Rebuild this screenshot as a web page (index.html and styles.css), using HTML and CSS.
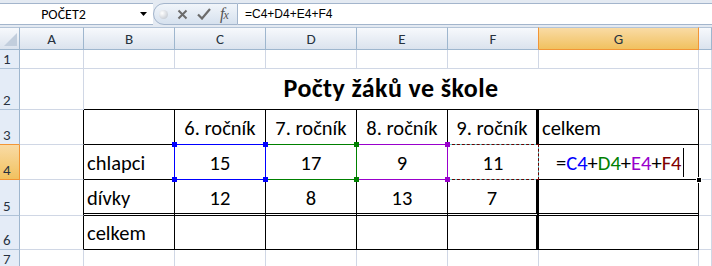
FILE: index.html
```html
<!DOCTYPE html>
<html lang="cs">
<head>
    <meta charset="UTF-8">
    <title>Počty žáků ve škole</title>
    <link rel="stylesheet" href="styles.css">
</head>
<body>

    <div class="formula-bar">
        <div class="name-box">
            <span class="name">POČET2</span>
            <svg class="drop" width="7" height="4" viewBox="0 0 7 4"><path d="M0 0h7L3.5 4z" fill="#000"/></svg>
        </div>
        <div class="fx-buttons">
            <span class="dot"></span>
            <svg class="btn" width="11" height="11" viewBox="0 0 11 11"><path d="M1.5 1.5l8 8M9.5 1.5l-8 8" stroke="#6b6b6b" stroke-width="2"/></svg>
            <svg class="btn" width="14" height="12" viewBox="0 0 14 12"><path d="M1 6.5l4 4L13 1" stroke="#6b6b6b" stroke-width="2.2" fill="none"/></svg>
            <span class="fx">f<small>x</small></span>
        </div>
        <div class="formula">=C4+D4+E4+F4</div>
    </div>

    <div class="sheet">
        <!-- column headers -->
        <div class="corner"><svg width="15" height="15" viewBox="0 0 15 15"><path d="M14 1v13H1z" fill="#c2cedd"/></svg></div>
        <div class="col">A</div>
        <div class="col">B</div>
        <div class="col">C</div>
        <div class="col">D</div>
        <div class="col">E</div>
        <div class="col pre-sel">F</div>
        <div class="col sel">G</div>
        <div class="col"></div>

        <!-- row 1 -->
        <div class="rh">1</div>
        <div class="cell"></div><div class="cell"></div><div class="cell"></div><div class="cell"></div>
        <div class="cell"></div><div class="cell"></div><div class="cell"></div><div class="cell"></div>

        <!-- row 2 -->
        <div class="rh">2</div>
        <div class="cell"></div>
        <div class="cell title">Počty žáků ve škole</div>
        <div class="cell"></div>

        <!-- row 3 -->
        <div class="rh pre-sel">3</div>
        <div class="cell edge"></div>
        <div class="cell tb"></div>
        <div class="cell tb mid">6. ročník</div>
        <div class="cell tb mid">7. ročník</div>
        <div class="cell tb mid">8. ročník</div>
        <div class="cell tb mid thick">9. ročník</div>
        <div class="cell tb">celkem</div>
        <div class="cell"></div>

        <!-- row 4 -->
        <div class="rh sel">4</div>
        <div class="cell edge"></div>
        <div class="cell tb">chlapci</div>
        <div class="cell tb mid">15<span class="ref blue"><i class="tl"></i><i class="tr"></i><i class="bl"></i><i class="br"></i></span></div>
        <div class="cell tb mid">17<span class="ref green"><i class="tl"></i><i class="tr"></i><i class="bl"></i><i class="br"></i></span></div>
        <div class="cell tb mid">9<span class="ref purple"><i class="tl"></i><i class="tr"></i><i class="bl"></i><i class="br"></i></span></div>
        <div class="cell tb mid">11<span class="ants"></span></div>
        <div class="cell tb edit">
            <span>=<span class="c-blue">C4</span>+<span class="c-green">D4</span>+<span class="c-purple">E4</span>+<span class="c-red">F4</span><span class="caret"></span></span>
            <span class="handle"></span>
        </div>
        <div class="cell"></div>

        <!-- row 5 -->
        <div class="rh">5</div>
        <div class="cell edge"></div>
        <div class="cell tb dbl">dívky</div>
        <div class="cell tb dbl mid">12</div>
        <div class="cell tb dbl mid">8</div>
        <div class="cell tb dbl mid">13</div>
        <div class="cell tb dbl mid thick">7</div>
        <div class="cell tb dbl"></div>
        <div class="cell"></div>

        <!-- row 6 -->
        <div class="rh">6</div>
        <div class="cell edge"></div>
        <div class="cell tb">celkem</div>
        <div class="cell tb"></div>
        <div class="cell tb"></div>
        <div class="cell tb"></div>
        <div class="cell tb thick"></div>
        <div class="cell tb"></div>
        <div class="cell"></div>

        <!-- row 7 -->
        <div class="rh">7</div>
        <div class="cell"></div><div class="cell"></div><div class="cell"></div><div class="cell"></div>
        <div class="cell"></div><div class="cell"></div><div class="cell"></div><div class="cell"></div>
    </div>

</body>
</html>
```

FILE: styles.css
```css
* {
    box-sizing: border-box;
}
body {
    margin: 0;
    width: 712px;
    height: 266px;
    overflow: hidden;
    background-color: #fff;
    font-family: 'Carlito', 'Lato', 'Liberation Sans', sans-serif;
    color: #000;
}

/* formula bar */
.formula-bar {
    display: flex;
    height: 27px;
    padding: 3px 0 2px;
    background-color: #e4eaf2;
}
.name-box {
    width: 153px;
    display: flex;
    align-items: center;
    background-color: #fff;
    border-top: 1px solid #a3b5cc;
    border-bottom: 1px solid #a3b5cc;
}
.name {
    width: 127px;
    text-align: center;
    font-size: 14px;
}
.drop {
    margin-left: 13px;
}
.fx-buttons {
    width: 85px;
    display: flex;
    align-items: center;
    padding-left: 5px;
    gap: 9px;
    background: linear-gradient(#f1f5fa, #d6e1ee);
    border: 1px solid #a3b5cc;
    border-radius: 11px 0 0 11px;
}
.dot {
    width: 9px;
    height: 9px;
    border-radius: 50%;
    background: radial-gradient(circle at 35% 35%, #fff 0, #d4d8de 60%, #b9bfc8 100%);
}
.fx {
    font-family: 'Liberation Serif', serif;
    font-style: italic;
    font-size: 16px;
    color: #555;
    letter-spacing: -1px;
}
.fx small {
    font-size: 12px;
}
.formula {
    flex: 1;
    display: flex;
    align-items: center;
    padding-left: 7px;
    font-family: 'Liberation Sans', sans-serif;
    font-size: 12px;
    background-color: #fff;
    border-top: 1px solid #a3b5cc;
    border-bottom: 1px solid #a3b5cc;
}

/* sheet grid */
.sheet {
    display: grid;
    grid-template-columns: 20px 64px 91px 91px 91px 91px 91px 160px 1fr;
    grid-template-rows: 23px 19px 41px 35px 35px 36px 34px 1fr;
    height: 239px;
}
.corner, .col {
    background: linear-gradient(#f7f9fc, #dbe3ee);
    border-top: 1px solid #b4c4d7;
    border-right: 1px solid #9eb6ce;
    border-bottom: 1px solid #9eb6ce;
}
.corner {
    display: flex;
    align-items: flex-end;
    justify-content: flex-end;
    padding: 0 1px 2px 0;
}
.col {
    display: flex;
    align-items: center;
    justify-content: center;
    font-size: 15px;
    color: #27323f;
}
.col.pre-sel {
    border-right-color: #f29536;
}
.col.sel {
    background: linear-gradient(#f9dba5, #f1c15f);
    border-right-color: #f29536;
    border-bottom-color: #f29536;
}
.rh {
    display: flex;
    align-items: flex-end;
    padding-left: 3px;
    font-size: 15px;
    color: #27323f;
    background-color: #e4ecf7;
    border-right: 1px solid #9eb6ce;
    border-bottom: 1px solid #aec2d8;
}
.rh.pre-sel {
    border-bottom-color: #f29536;
}
.rh.sel {
    background: linear-gradient(#f9dba5, #f1c15f);
    border-right-color: #f29536;
    border-bottom-color: #f29536;
}

.cell {
    position: relative;
    display: flex;
    align-items: flex-end;
    padding: 0 3px 5px;
    font-size: 20.5px;
    line-height: 22px;
    white-space: nowrap;
    border-right: 1px solid #d0d7e5;
    border-bottom: 1px solid #d0d7e5;
}
.title {
    grid-column: span 6;
    justify-content: center;
    padding-bottom: 6px;
    font-size: 26px;
    line-height: 30px;
    letter-spacing: 0.4px;
    font-weight: bold;
    border-bottom-color: #000;
}
.edge {
    border-right-color: #000;
}
.tb {
    border-right-color: #000;
    border-bottom-color: #000;
}
.mid {
    justify-content: center;
}
.thick {
    border-right: 3px solid #000;
}
.dbl {
    border-bottom: 3px double #000;
    padding-bottom: 4px;
}

/* reference outlines while editing G4 */
.ref, .ants {
    position: absolute;
    inset: -1px;
    border: 1px solid;
}
.ref i {
    position: absolute;
    width: 5px;
    height: 5px;
    background-color: currentColor;
}
.ref .tl { top: -3px; left: -3px; }
.ref .tr { top: -3px; right: -3px; }
.ref .bl { bottom: -3px; left: -3px; }
.ref .br { bottom: -3px; right: -3px; }
.blue { color: #0000ff; z-index: 4; }
.green { color: #008000; z-index: 3; }
.purple { color: #9900cc; z-index: 2; }
.ants {
    z-index: 1;
    border-color: #5fd6d6;
}
.ants::after {
    content: '';
    position: absolute;
    inset: -1px;
    border: 1px dashed #6b0000;
}

.edit {
    padding-left: 17px;
}
.c-blue { color: #0000ff; }
.c-green { color: #008000; }
.c-purple { color: #9900cc; }
.c-red { color: #800000; }
.caret {
    position: relative;
    top: 7px;
    display: inline-block;
    width: 1px;
    height: 29px;
    margin-left: 2px;
    background-color: #000;
}
.handle {
    position: absolute;
    right: -4px;
    bottom: -4px;
    width: 6px;
    height: 6px;
    background-color: #000;
    border: 1px solid #fff;
    z-index: 5;
}
```
